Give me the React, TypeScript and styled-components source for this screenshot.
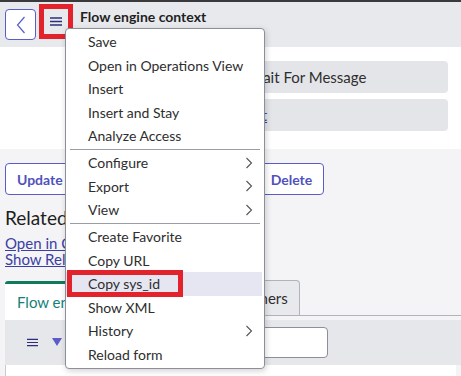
import styled, { createGlobalStyle } from 'styled-components';

const GlobalStyle = createGlobalStyle`
  html, body {
    margin: 0;
    padding: 0;
    background: #f4f4f6;
    font-family: Lato, "Noto Sans", sans-serif;
    color: #2e2e2e;
  }
`;

const Page = styled.div`
  position: relative;
  width: 461px;
  height: 376px;
  overflow: hidden;
  background: #f4f4f6;
`;

const Header = styled.header`
  display: flex;
  align-items: flex-start;
  gap: 3px;
  height: 43px;
  padding: 2px 5px 0;
  border-top: 2px solid #3a3a3c;
  background: #e8e9ed;
`;

const BackButton = styled.button`
  display: flex;
  align-items: center;
  justify-content: center;
  width: 31px;
  height: 31px;
  margin-top: 5px;
  padding: 0;
  border: 1px solid #5a5dc8;
  border-radius: 4px;
  background: #fff;
  color: #5a5dc8;
`;

const MenuButton = styled.button<{ $marked?: boolean }>`
  display: flex;
  align-items: center;
  justify-content: center;
  width: 34px;
  height: 35px;
  padding: 0;
  border: 5px solid ${(p) => (p.$marked ? '#e3232c' : 'transparent')};
  background: transparent;
  color: #2d2f7a;
`;

const TitleBlock = styled.div`
  display: flex;
  flex-direction: column;
  padding: 5px 0 0 4px;
  font-size: 14px;
  font-weight: 700;
  line-height: 16px;
  color: #1f1f1f;
`;

const FormSection = styled.section`
  display: flex;
  flex-direction: column;
  gap: 6px;
  padding: 14px 13px 18px 0;
  background: #fff;
`;

const FieldRow = styled.div`
  display: grid;
  grid-template-columns: 208px 1fr;
  align-items: center;
`;

const Label = styled.span`
  padding-left: 90px;
  font-size: 14px;
  color: #444;
`;

const FieldBox = styled.div`
  display: flex;
  align-items: center;
  height: 32px;
  padding: 0 10px;
  border-radius: 4px;
  background: #e4e5e9;
  font-size: 15px;
  color: #2e2e2e;
`;

const FieldLink = styled.a`
  color: #3b3ea3;
  text-decoration: underline;
`;

const Body = styled.div`
  padding: 14px 5px 0;
`;

const ButtonRow = styled.div`
  display: flex;
  gap: 6px;
`;

const ActionButton = styled.button<{ $w?: number }>`
  height: 32px;
  padding: 0 11px;
  border: 1px solid #5a5dc8;
  border-radius: 4px;
  background: #fff;
  color: #4f52bd;
  font-family: inherit;
  font-size: 14px;
  font-weight: 700;
  ${(p) => (p.$w ? `width: ${p.$w}px;` : '')}
`;

const RelatedTitle = styled.h3`
  margin: 11px 0 5px;
  font-size: 19px;
  font-weight: 400;
  line-height: 24px;
  color: #1e1e1e;
`;

const RelatedLink = styled.a`
  display: block;
  font-size: 15px;
  line-height: 16px;
  color: #3b3ea3;
  text-decoration: underline;
`;

const TabStrip = styled.div`
  position: relative;
  display: flex;
  align-items: flex-start;
  gap: 13px;
  height: 39px;
  margin-top: 14px;

  &::after {
    content: '';
    position: absolute;
    left: 0;
    right: -5px;
    top: 34px;
    height: 1px;
    background: #b0b3bb;
  }
`;

const Tab = styled.div<{ $active?: boolean }>`
  position: relative;
  z-index: 1;
  display: flex;
  align-items: center;
  padding: 0 11px 0 12px;
  font-size: 15px;
  white-space: nowrap;
  ${(p) =>
    p.$active
      ? `
    height: 36px;
    border-top: 3px solid #0f7a5c;
    border-radius: 3px 3px 0 0;
    background: #fff;
    color: #15807a;
  `
      : `
    height: 34px;
    margin-top: -1px;
    border: 1px solid #b0b3bb;
    border-bottom: 0;
    border-radius: 4px 4px 0 0;
    background: #e8e9ec;
    color: #2e2e2e;
  `}
`;

const Toolbar = styled.div`
  display: flex;
  align-items: center;
  gap: 14px;
  height: 45px;
  margin-right: -5px;
  padding: 0 0 0 22px;
  background: #e6e7ea;
  color: #2d2f7a;
`;

const SearchInput = styled.div`
  width: 155px;
  height: 29px;
  margin-left: 95px;
  border: 1px solid #8c8f99;
  border-radius: 4px;
  background: #fff;
`;

const ListArea = styled.div`
  height: 20px;
  border-left: 1px solid #c9cbd1;
  background: #fff;
`;

const Menu = styled.ul`
  position: absolute;
  z-index: 10;
  left: 65px;
  top: 28px;
  width: 196px;
  margin: 0;
  padding: 1px 2px 2px 0;
  list-style: none;
  border: 1px solid #8c8f99;
  border-radius: 4px;
  background: #fff;
  box-shadow: 1px 2px 6px rgba(0, 0, 0, 0.18);
`;

const MenuItem = styled.li<{ $active?: boolean }>`
  position: relative;
  display: flex;
  align-items: center;
  justify-content: space-between;
  height: 23.5px;
  padding: 0 9px 0 22px;
  font-size: 14px;
  white-space: nowrap;
  color: #2e2e2e;
  background: ${(p) => (p.$active ? '#e6e6f3' : 'transparent')};
`;

const Marker = styled.span`
  position: absolute;
  left: 1px;
  top: -2px;
  width: 116px;
  height: 27px;
  border: 5px solid #e3232c;
  box-sizing: border-box;
`;

const Separator = styled.li`
  height: 1px;
  margin: 1.25px 2px 1.25px 4px;
  background: #9a9da6;
`;

const Chevron = () => (
  <svg width="8" height="12" viewBox="0 0 8 12">
    <polyline points="1.5,1 6.5,6 1.5,11" fill="none" stroke="#555" strokeWidth="1.1" />
  </svg>
);

const Hamburger = ({ size = 12 }: { size?: number }) => (
  <svg width={size} height="9" viewBox="0 0 12 9">
    <path d="M0 1h12M0 4.5h12M0 8h12" stroke="currentColor" strokeWidth="1.3" />
  </svg>
);

type Entry = { label: string; sub?: boolean; active?: boolean } | 'sep';

const menuEntries: Entry[] = [
  { label: 'Save' },
  { label: 'Open in Operations View' },
  { label: 'Insert' },
  { label: 'Insert and Stay' },
  { label: 'Analyze Access' },
  'sep',
  { label: 'Configure', sub: true },
  { label: 'Export', sub: true },
  { label: 'View', sub: true },
  'sep',
  { label: 'Create Favorite' },
  { label: 'Copy URL' },
  { label: 'Copy sys_id', active: true },
  { label: 'Show XML' },
  { label: 'History', sub: true },
  { label: 'Reload form' },
];

export default function App() {
  return (
    <Page>
      <GlobalStyle />
      <Header>
        <BackButton>
          <svg width="10" height="18" viewBox="0 0 10 18">
            <polyline points="8.5,1 1.5,9 8.5,17" fill="none" stroke="currentColor" strokeWidth="1.2" />
          </svg>
        </BackButton>
        <MenuButton $marked>
          <Hamburger />
        </MenuButton>
        <TitleBlock>
          <span>Flow engine context</span>
          <span>Test Wait For Message</span>
        </TitleBlock>
      </Header>

      <FormSection>
        <FieldRow>
          <Label>Name</Label>
          <FieldBox>Test Wait For Message</FieldBox>
        </FieldRow>
        <FieldRow>
          <Label>Flow</Label>
          <FieldBox>
            <FieldLink>Default</FieldLink>
          </FieldBox>
        </FieldRow>
      </FormSection>

      <Body>
        <ButtonRow>
          <ActionButton>Update</ActionButton>
          <ActionButton $w={83}>Cancel</ActionButton>
          <ActionButton $w={83}>Resume</ActionButton>
          <ActionButton>Delete</ActionButton>
        </ButtonRow>
        <RelatedTitle>Related Links</RelatedTitle>
        <RelatedLink>Open in Context Viewer</RelatedLink>
        <RelatedLink>Show Related Records</RelatedLink>

        <TabStrip>
          <Tab $active>Flow engine context</Tab>
          <Tab>Event Listeners</Tab>
        </TabStrip>
        <Toolbar>
          <Hamburger size={11} />
          <svg width="10" height="9" viewBox="0 0 10 9">
            <path d="M0 0h10L5 8z" fill="#5a5dc8" />
          </svg>
          <SearchInput />
        </Toolbar>
        <ListArea />
      </Body>

      <Menu>
        {menuEntries.map((e, i) =>
          e === 'sep' ? (
            <Separator key={i} />
          ) : (
            <MenuItem key={i} $active={e.active}>
              {e.label}
              {e.sub && <Chevron />}
              {e.active && <Marker />}
            </MenuItem>
          ),
        )}
      </Menu>
    </Page>
  );
}
